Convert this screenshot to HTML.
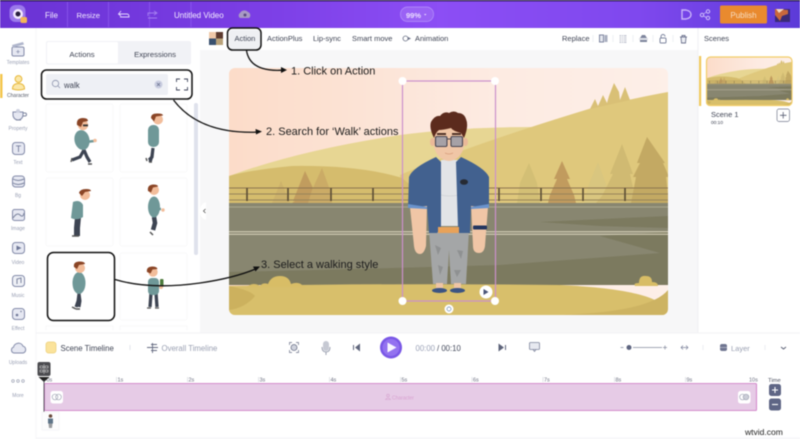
<!DOCTYPE html>
<html><head><meta charset="utf-8"><style>
html,body{margin:0;padding:0;background:#fff;width:800px;height:439px;overflow:hidden}
svg{display:block;position:absolute;left:0;top:0;filter:blur(.45px)}
text{font-family:"Liberation Sans",sans-serif}
.m{font-size:8px;fill:#3f4454}
.s{font-size:5px;fill:#9aa0b4;text-anchor:middle}
.t{font-size:8px;fill:#f4ecff}
.r{font-size:5.5px;fill:#6b6f80}
.a{font-size:11px;fill:#1c1c1c}
.ic{fill:#e6e8f2;stroke:#838ba9;stroke-width:1}
.ln{fill:none;stroke:#7d859f;stroke-width:1}
</style></head><body>
<svg width="800" height="439" viewBox="0 0 800 439" xmlns="http://www.w3.org/2000/svg">
<defs>
<linearGradient id="top" x1="0" x2="1" y1="0" y2="0"><stop offset="0" stop-color="#6a33d4"/><stop offset=".3" stop-color="#7a3de4"/><stop offset=".55" stop-color="#8c4ef5"/><stop offset=".8" stop-color="#7f48ee"/><stop offset="1" stop-color="#5c3bd8"/></linearGradient>
<linearGradient id="sky" x1="0" x2="1" y1="0" y2="0"><stop offset="0" stop-color="#fcdcc9"/><stop offset=".6" stop-color="#fdebe2"/><stop offset="1" stop-color="#fdefe8"/></linearGradient>
<clipPath id="cv"><rect x="229" y="68" width="439" height="247" rx="6"/></clipPath>
<clipPath id="th"><rect x="706" y="57" width="86" height="49" rx="4"/></clipPath>
<g id="scene">
<rect x="229" y="68" width="439" height="247" fill="url(#sky)"/>
<path d="M229 176Q300 150 400 135Q460 127 535 127L535 210L229 210Z" fill="#e7d693"/>
<path d="M400 175Q470 145 592 108Q640 97 668 92L668 210L400 210Z" fill="#dfc87c"/>
<path d="M590 109L595 99L598 106L603 95L607 103L609 96L614 83L619 92L620 100L625 87L630 100Z" fill="#d9c076"/>
<path d="M229 176Q250 170 292 166Q360 165 402 178L440 210L229 210Z" fill="#d5bc6d"/>
<path d="M281 181l-9 22h18Z" fill="#cdb26a"/>
<path d="M305 171l-12 30h2l-3 2h28l-3-2h2Z" fill="#c19c5e"/>
<path d="M322 168l-10 22-4 13h24l-2-13Z" fill="#cbab66"/>
<path d="M529 163l-9 20-3 20h23l-3-20Z" fill="#d3bf75"/>
<path d="M562 161l-8 18 3 0-7 16-2 8h28l-2-8-7-16 3 0Z" fill="#c19b5e"/>
<path d="M598 162l-9 22-5 19h26l-4-19Z" fill="#d9c67f"/>
<path d="M622 144l-12 30 3 0-11 22-6 7h44l-5-7-5-22 3 0Z" fill="#d0ba72"/>
<path d="M647 137l-10 26 3 0-7 14 3 0-5 26h38l-3-26 3 0-6-14 2 0Z" fill="#c3a963"/>
<rect x="229" y="203" width="439" height="82" fill="#888670"/>
<path d="M540 222L668 216V228L600 226ZM600 236L668 232V285H229V272Q400 268 500 265L660 253Z" fill="#7c7a5f"/>
<path d="M229 207H668" stroke="#b6b399" stroke-width=".8"/>
<path d="M229 231.700H668M229 234.300H668" stroke="#ddd7bf" stroke-width="1"/>
<path d="M229 188H668" stroke="#8d7550" stroke-width="1"/><path d="M229 194H668M229 200H668" stroke="#97845a" stroke-width=".9"/>
<path d="M247 188V201M288 188V201M331 188V201M373 188V201M415 188V201M457 188V201M499 188V201M541 188V201M583 188V201M625 188V201" stroke="#5a4c34" stroke-width="1.600"/>
<path d="M229 286Q400 283 560 285Q668 290 668 315H229Z" fill="#d8bf6b"/>
<path d="M229 286Q250 290 255 296Q245 308 229 310Z" fill="#ccb15e"/>
<path d="M560 315Q650 312 668 290V315Z" fill="#cdb362"/>
<path d="M248 286q6-4 12 0q3-4 8-2q3-8 12-8q9 0 11 8q8-3 12 2q4 0 3 1h-60Z" fill="#d8bd66"/>
<path d="M635 286q-2-3 4-3q0-8 7-7q6 0 6 6q6 0 6 4Z" fill="#d8bd66"/>
</g>
</defs>

<rect width="800" height="439" fill="#fff"/>
<!-- top bar -->
<rect y="1" width="800" height="27" fill="url(#top)"/><rect width="800" height="1.200" fill="#1d1038"/>
<rect x="9.500" y="5" width="16" height="17" rx="6" fill="#a78bf0" opacity=".8"/><circle cx="18" cy="14" r="5" fill="#f3e9ff"/><circle cx="18" cy="14" r="2.500" fill="#2a2040"/><rect x="20.500" y="17" width="6.500" height="6" rx="1.500" fill="#f3b557"/>
<path d="M67.500 2V27M108.500 2V27M149.500 2V27M191 2V27" stroke="#8f5cf0" stroke-width=".7"/>
<text x="45" y="18" class="t">File</text><text x="76.500" y="18" class="t" style="font-size:7.700px">Resize</text>
<path d="M119 14h8q2 0 2 3h-9M121 11l-2.500 3 2.500 2" fill="none" stroke="#e5d8ff" stroke-width=".9"/>
<path d="M148 16v-3h9M154 11l3 2-3 2M148 18h9" fill="none" stroke="#a47ef0" stroke-width=".9"/>
<text x="174" y="18" class="t">Untitled Video</text>
<path d="M240 18a3 3 0 0 1 0-5a5 5 0 0 1 8-1a3.500 3.500 0 0 1 1 6Z" fill="#a89ac4"/><circle cx="245" cy="15" r="1.500" fill="#5a4a80"/>
<rect x="400.500" y="7" width="33" height="14.500" rx="7" fill="#9a62f5" stroke="#b592fa" stroke-width=".7"/>
<text x="406" y="18" style="font-size:7.500px;font-weight:bold;fill:#eadcff">99%</text><path d="M424 14h2.500l-1.250 1.500Z" fill="#eadcff"/>
<path d="M682 10h4q5 1 5 4.500t-5 4.500h-4Z" fill="none" stroke="#c9b4fa" stroke-width="1.400"/>
<circle cx="702" cy="15" r="1.700" fill="none" stroke="#d0bffa"/><circle cx="708" cy="11.500" r="1.700" fill="none" stroke="#d0bffa"/><circle cx="708" cy="18" r="1.700" fill="none" stroke="#d0bffa"/><path d="M703.500 14l3-2M703.500 16l3 1.500" stroke="#d0bffa" stroke-width=".7"/>
<rect x="720" y="5.500" width="47" height="18" rx="1.500" fill="#e98a2f"/>
<text x="743.500" y="18" style="font-size:8px;fill:#f7dcc0;text-anchor:middle">Publish</text>
<rect x="775" y="9" width="15" height="13" fill="#3a2a78"/><path d="M775 9l13 1 0 4-6 2-2 5-5-6Z" fill="#c9683c"/><path d="M776 9h8l-5 4Z" fill="#f3d8c0"/>

<!-- sidebar -->
<rect y="28" width="36" height="305" fill="#fff"/><path d="M36 28V439" stroke="#f6f6f8" stroke-width="1"/>
<rect x="0" y="74" width="2.500" height="24" fill="#f3c64d"/>
<rect x="12" y="47" width="12" height="9" rx="1.500" class="ic"/><path d="M12 45l11-3 1 2.500-11 3Z" fill="#b0b6cc"/><path d="M18 50v3.500M16.200 51.700h3.600" stroke="#838ba9" stroke-width=".7"/>
<text x="18" y="64" class="s">Templates</text>
<circle cx="18.500" cy="79" r="3.400" fill="#fbe7a8" stroke="#e8b83a" stroke-width="1"/><path d="M12.500 89q0-5.500 6-5.500t6 5.500q-6 2-12 0Z" fill="#fbe7a8" stroke="#e8b83a" stroke-width="1"/>
<text x="18" y="97" class="s" style="fill:#555a68">Character</text>
<path d="M13 112h10v3a5 5 0 0 1-10 0Z" class="ic"/><path d="M23 113h2a1.500 1.500 0 0 1 0 3h-2.500M16 120h5" class="ln"/><circle cx="18" cy="111" r="2" fill="#cdd1e0"/>
<text x="18" y="130" class="s">Property</text>
<rect x="12.500" y="142.500" width="12" height="12" rx="3" class="ic"/><text x="18.500" y="152" style="font-size:9px;fill:#6f7797;text-anchor:middle">T</text>
<text x="18" y="164" class="s">Text</text>
<rect x="12.500" y="176" width="12" height="11" rx="3" class="ic"/><path d="M13 179q5 3 11 0M13 183q5 3 11 0" class="ln"/>
<text x="18" y="197" class="s">Bg</text>
<rect x="12.500" y="209.500" width="12" height="11" rx="2" class="ic"/><path d="M13 218q4-6 7-3t4-2" class="ln"/>
<text x="18" y="230" class="s">Image</text>
<rect x="12.500" y="242.500" width="12" height="11" rx="3" class="ic"/><path d="M16.500 245.500l5 2.500-5 2.500Z" fill="#6f7797"/>
<text x="18" y="264" class="s">Video</text>
<rect x="12.500" y="275.500" width="12" height="11" rx="3" class="ic" style="fill:#eef0f6"/><path d="M17 284v-5l4-1v5" class="ln"/>
<text x="18" y="297" class="s">Music</text>
<rect x="12.500" y="308.500" width="12" height="11" rx="3" class="ic"/><circle cx="17" cy="315" r="1.300" fill="#6f7797"/><circle cx="21" cy="311.500" r=".7" fill="#6f7797"/>
<text x="18" y="330" class="s">Effect</text>
<path d="M14 353a3 3 0 0 1-.5-5.800a5 5 0 0 1 9.500-1a3.500 3.500 0 0 1 0 6.800Z" class="ic"/>
<text x="18" y="364" class="s">Uploads</text>
<circle cx="13" cy="381" r="1.300" fill="none" stroke="#8d93a8" stroke-width=".6"/><circle cx="18" cy="381" r="1.300" fill="none" stroke="#8d93a8" stroke-width=".6"/><circle cx="23" cy="381" r="1.300" fill="none" stroke="#8d93a8" stroke-width=".6"/>
<text x="18" y="397" class="s">More</text>

<!-- panel -->
<rect x="36.500" y="28" width="163.500" height="305" fill="#fff"/>
<rect x="46" y="41" width="145" height="23.500" rx="2" fill="#f1f2f6"/><rect x="47" y="42" width="71" height="21.500" rx="1.500" fill="#fff"/>
<text x="82" y="57" class="m" style="text-anchor:middle;font-size:7.700px">Actions</text><text x="155" y="57" class="m" style="text-anchor:middle;font-size:7.700px">Expressions</text>
<rect x="46" y="74" width="122" height="21" rx="2" fill="#eef0f5"/>
<circle cx="55.500" cy="83.500" r="3.200" fill="none" stroke="#8b92ac" stroke-width=".8"/><path d="M58 86l2 2" stroke="#8b92ac" stroke-width=".8"/>
<text x="64" y="88" class="m" style="font-size:7.800px">walk</text>
<circle cx="158.500" cy="84.500" r="4" fill="#c9cde0"/><path d="M157 83l3 3M160 83l-3 3" stroke="#6b7290" stroke-width=".8"/>
<path d="M176.500 82v-3h3.500M184 79h3.500v3M187.500 87v3h-3.500M180 90h-3.500v-3" fill="none" stroke="#40465c" stroke-width=".9"/>
<g fill="#fff" stroke="#f8f8fa" stroke-width="1"><rect x="46" y="104" width="67" height="68" rx="2"/><rect x="120" y="104" width="67" height="68" rx="2"/><rect x="46" y="178" width="67" height="68" rx="2"/><rect x="120" y="178" width="67" height="68" rx="2"/><rect x="120" y="253" width="67" height="67" rx="2"/><rect x="46" y="326" width="67" height="20"/><rect x="120" y="326" width="67" height="20"/></g>
<rect x="194" y="103" width="4" height="152" rx="2" fill="#dfe2ec"/>

<!-- mini characters -->
<g>
<path d="M84 150l-4 7-8 3M84 150l3 7 3 5" fill="none" stroke="#3d4452" stroke-width="3.200"/><path d="M72 158l-1 4M88 164h4" stroke="#555" stroke-width="1.400"/>
<ellipse cx="82" cy="140" rx="7.500" ry="10" fill="#6f9898" transform="rotate(-12 82 140)"/><path d="M86 142l8-1" stroke="#6f9898" stroke-width="2.500"/><circle cx="95" cy="140.500" r="1.800" fill="#f2bd9b"/>
<circle cx="83" cy="125" r="5.200" fill="#f2bd9b"/><path d="M77 125q-1-7 6-7 5 0 5 3l-5 1-2 5Z" fill="#8a4526"/><rect x="83" y="124.500" width="5" height="1.800" fill="#333"/>
</g>
<g>
<path d="M153 148l-1 9-3 3M153 148l-1 8-2 6" fill="none" stroke="#3d4452" stroke-width="3.200"/><path d="M146 158l1 3M149 162h3" stroke="#555" stroke-width="1.400"/>
<rect x="148" y="125" width="11" height="22" rx="5" fill="#6f9898"/>
<circle cx="158" cy="119.500" r="5" fill="#f2bd9b"/><path d="M151 118q0-5 7-4.500 5 0 5 2l-7 1-2 5Z" fill="#8a4526"/>
</g>
<g>
<path d="M78 217l-1 11v8" fill="none" stroke="#3d4452" stroke-width="6"/><path d="M72 236h7" stroke="#555" stroke-width="1.500"/>
<path d="M73 202q7-3 10 3l0 12q-6 4-12 1Z" fill="#6f9898"/>
<circle cx="85" cy="195" r="5" fill="#f2bd9b"/><path d="M79 193q1-4 7-4 5 0 5 2l-6 1-3 4Z" fill="#8a4526"/>
</g>
<g>
<path d="M154 217l1 6-2 7" fill="none" stroke="#3d4452" stroke-width="4.500"/><path d="M150 232l3 3" stroke="#555" stroke-width="1.500"/>
<ellipse cx="154" cy="207" rx="6" ry="10.500" fill="#6f9898"/><path d="M157 209h4" stroke="#6f9898" stroke-width="2.500"/><circle cx="163" cy="210" r="1.700" fill="#f2bd9b"/>
<circle cx="154" cy="190" r="5" fill="#f2bd9b"/><path d="M148 191q-1-6 5-6.500 5 0 5 2l-5 1-2 5Z" fill="#8a4526"/>
</g>
<g>
<path d="M79 293l-1 8-2 6M79 293l1 8-1 6" fill="none" stroke="#3d4452" stroke-width="3"/><path d="M72 307l4 2M76 309h4" stroke="#555" stroke-width="1.500"/>
<ellipse cx="79" cy="283" rx="6.500" ry="11" fill="#6f9898"/>
<circle cx="80" cy="268" r="5" fill="#f2bd9b"/><path d="M74 267q-1-5 5-5.500 6 0 6 2.500l-6 1-2 4Z" fill="#8a4526"/>
</g>
<g>
<path d="M151 293l-1 14M156 293l1 14" fill="none" stroke="#3d4452" stroke-width="3.300"/><path d="M147 308h4M155 308h4" stroke="#555" stroke-width="1.300"/>
<rect x="148" y="278" width="11" height="17" rx="4" fill="#6f9898"/>
<rect x="160" y="279" width="3.500" height="8" rx="1" fill="#4c7a3c"/><circle cx="161" cy="287" r="2" fill="#f2bd9b"/>
<circle cx="153" cy="272" r="4.700" fill="#f2bd9b"/><path d="M147 272q-1-5 5-5.500 5 0 5.500 2.500l-5 .5-2 4Z" fill="#8a4526"/>
</g>
<rect x="36.500" y="330" width="164" height="3" fill="#fff"/>

<!-- canvas area -->
<rect x="200" y="28" width="600" height="305" fill="#f7f7f8"/>
<path d="M200 211q0-7 6-9v18q-6-2-6-9Z" fill="#fff"/><path d="M205.500 209l-2 2 2 2" fill="none" stroke="#555" stroke-width=".8"/>
<rect x="200" y="28" width="598" height="22" fill="#fff"/>
<rect x="209" y="32" width="7" height="6.500" fill="#efc8a8"/><rect x="216" y="32" width="7" height="6.500" fill="#5c3a2e"/><rect x="209" y="38.500" width="7" height="6.500" fill="#39516f"/><rect x="216" y="38.500" width="7" height="6.500" fill="#b9a27a"/>
<rect x="229" y="30" width="31" height="19" rx="3" fill="#eff0f3"/>
<text x="234.500" y="41" class="m" style="font-size:7.500px">Action</text><text x="267" y="41" class="m" style="font-size:7.500px">ActionPlus</text><text x="313" y="41" class="m" style="font-size:7.500px">Lip-sync</text><text x="352" y="41" class="m" style="font-size:7.500px">Smart move</text><text x="415" y="41" class="m" style="font-size:7.500px">Animation</text><text x="562" y="41" class="m" style="font-size:7.500px">Replace</text>
<circle cx="405.500" cy="38.500" r="2.500" fill="none" stroke="#6b7186" stroke-width=".8"/><path d="M408 37l3 1.500-3 1.500Z" fill="#6b7186"/>
<rect x="599.500" y="35" width="4" height="7" class="ln" style="fill:#e6e8ef"/><rect x="604.500" y="35" width="3" height="7" fill="#a9aec0"/>
<rect x="619.500" y="35" width="7" height="8" fill="#b4b7c6" opacity=".7"/><path d="M619.500 37h7M619.500 39h7M619.500 41h7M621.500 35v8M623.500 35v8" stroke="#fff" stroke-width=".7"/>
<path d="M640 42v-4l2-3h3l2 3v4Z" fill="#7d849c"/><rect x="639" y="38" width="9" height="2" fill="#dfe1e8"/>
<rect x="660" y="38" width="6" height="5" rx="1" class="ln"/><path d="M661 38v-1.500a2 2 0 0 1 4 0" class="ln"/>
<path d="M680 37h7M681 37l.5 6h4l.5-6M682 37v-1.500h3V37" fill="#eceef3" stroke="#6f7590" stroke-width=".9"/>
<path d="M593 35v7M613 35v7M633 35v7M653 35v7M673 35v7" stroke="#eeeff3"/>
<!-- canvas scene -->
<g clip-path="url(#cv)"><use href="#scene"/></g>

<!-- scenes panel -->
<rect x="698" y="28" width="102" height="305" fill="#fff"/><path d="M698 28V333" stroke="#f0f0f3"/>
<text x="704" y="41" class="m" style="font-size:7.500px">Scenes</text>
<rect x="699" y="56" width="2.200" height="50" fill="#f0c95e"/>
<g clip-path="url(#th)"><g transform="translate(706 57) scale(.1959 .1984) translate(-229 -68)"><use href="#scene"/></g></g>
<rect x="706.500" y="57" width="85.500" height="48.500" rx="4" fill="none" stroke="#f2cd68" stroke-width="1.200"/>
<text x="711" y="117" class="m" style="font-size:7.500px">Scene 1</text><text x="711" y="124" class="m" style="font-size:4.800px">00:10</text>
<rect x="777" y="109" width="12.500" height="12.500" rx="2" fill="#fff" stroke="#747a8e" stroke-width=".7"/><path d="M783.200 112v6.500M780 115.300h6.500" stroke="#555b70" stroke-width=".8"/>

<!-- timeline -->
<rect x="36.500" y="333" width="763.500" height="105" fill="#fff"/><path d="M36 333H800M36 438.300H800" stroke="#f2f2f5" stroke-width="1"/>
<rect x="46" y="342" width="10" height="11" rx="2.500" fill="#fbe39b" stroke="#eccf78" stroke-width=".7"/>
<text x="60.500" y="351" class="m" style="font-size:7.800px">Scene Timeline</text>
<path d="M130 345v5" stroke="#e4e5ea"/>
<path d="M147 347.500h11M151 344.500h6M151 350.500h6M152.500 343v10" stroke="#646a80" stroke-width=".9"/>
<text x="161.500" y="351" class="m" style="font-size:7.800px;fill:#9aa0b2">Overall Timeline</text>
<circle cx="294" cy="347.500" r="3" fill="#cfd2dd" stroke="#6c7288" stroke-width=".8"/><path d="M289.500 345v-2.500h2.500M296 342.500h2.500v2.500M298.500 350v2.500H296M292 352.500h-2.500V350" fill="none" stroke="#6c7288" stroke-width=".7"/>
<rect x="323" y="341" width="6" height="10" rx="3" fill="#c6c9d3"/><path d="M322 347q0 5 4 5t4-5M326 352v3" fill="none" stroke="#9ba0b0"/>
<rect x="353" y="345" width="1" height="5" fill="#60667c"/><path d="M360 343.500v8l-5-4Z" fill="#60667c"/>
<circle cx="391" cy="347.500" r="11" fill="#7a58e6"/><circle cx="391" cy="347.500" r="8.500" fill="#9372f0"/><path d="M387.500 342.500l9 5-9 5Z" fill="#f8f6ff"/>
<text x="415.500" y="351" style="font-size:7.800px;fill:#9ca3b8">00:00</text><text x="437" y="351" style="font-size:7.800px;fill:#444a5c"> / 00:10</text>
<path d="M498.500 343.500v8l5.500-4Z" fill="#5e647a"/><rect x="505" y="345" width="1" height="5" fill="#60667c"/>
<rect x="529.500" y="342.500" width="10" height="7" rx="1" fill="#e7e9f0" stroke="#7d849c" stroke-width=".8"/><path d="M533 349.500l1.500 2 1.500-2" fill="none" stroke="#7d849c" stroke-width=".8"/>
<path d="M620.500 347.500h3M633 347.500h29M663 347.500h4M665 345.500v4" stroke="#858b9f" stroke-width=".7"/><circle cx="629" cy="347.500" r="2.500" fill="#5e6580"/>
<path d="M681 347.500h7M683 345.500l-2 2 2 2M686 345.500l2 2-2 2" fill="none" stroke="#7d849c" stroke-width=".7"/>
<path d="M703 345v5M765 345v5" stroke="#eceef2"/>
<rect x="720" y="344" width="7" height="7" rx="2" fill="#6f7590"/><path d="M720 347.500h7" stroke="#cfd2dd" stroke-width=".6"/>
<text x="731" y="351" class="m" style="font-size:7.500px;fill:#9aa0b2">Layer</text>
<path d="M781 347l2.500 2 2.500-2" fill="none" stroke="#555b70" stroke-width=".9"/>
<!-- ruler -->
<text x="46.500" y="381.500" class="r">0s</text><text x="117.500" y="381.500" class="r">1s</text><text x="188.500" y="381.500" class="r">2s</text><text x="259.500" y="381.500" class="r">3s</text><text x="330.500" y="381.500" class="r">4s</text><text x="401.500" y="381.500" class="r">5s</text><text x="473" y="381.500" class="r">6s</text><text x="544" y="381.500" class="r">7s</text><text x="615.500" y="381.500" class="r">8s</text><text x="686.500" y="381.500" class="r">9s</text><text x="749" y="381.500" class="r">10s</text>
<path d="M116.500 377v5M187.500 377v5M258.500 377v5M329.500 377v5M400.500 377v5M472 377v5M543 377v5M614.500 377v5M685.500 377v5" stroke="#cfd1d9" stroke-width=".6"/>
<rect x="44.500" y="383.500" width="712" height="27" rx="1" fill="#e6cbe6" stroke="#d48ccd" stroke-width="1.100"/>
<rect x="50.500" y="391" width="12.500" height="12.500" rx="2.500" fill="#fff"/><rect x="738" y="391" width="12.500" height="12.500" rx="2.500" fill="#fff"/>
<circle cx="55" cy="397" r="2.800" fill="none" stroke="#a0a4b4" stroke-width=".7"/><circle cx="58.500" cy="397" r="2.800" fill="none" stroke="#a0a4b4" stroke-width=".7"/><circle cx="742.500" cy="397" r="2.800" fill="none" stroke="#a0a4b4" stroke-width=".7"/><circle cx="746" cy="397" r="2.800" fill="#ccced8" stroke="#a0a4b4" stroke-width=".7"/>
<circle cx="388" cy="395.500" r="1.300" fill="none" stroke="#d6a2ce" stroke-width=".6"/><path d="M385.500 399.500q2.500-3 5 0Z" fill="none" stroke="#d6a2ce" stroke-width=".6"/>
<text x="392" y="399.500" style="font-size:5px;fill:#d8a0d0">Character</text>
<text x="768" y="382" style="font-size:5.800px;fill:#4a4f5e">Time</text>
<rect x="769" y="384" width="12" height="12" rx="2.500" fill="#5e6585"/><path d="M775 387v6M772 390h6" stroke="#fff" stroke-width="1.100"/>
<rect x="769" y="398.500" width="12" height="12" rx="2.500" fill="#5e6585"/><path d="M772 404.500h6" stroke="#fff" stroke-width="1.100"/>
<rect x="37.500" y="362" width="13" height="14" rx="2" fill="#4b4b4f"/><path d="M40 366h3v2h-3ZM45 366h3v2h-3ZM40 370h3v2h-3ZM45 370h3v2h-3Z" fill="none" stroke="#ddd" stroke-width=".6"/><path d="M44 364v10" stroke="#ddd" stroke-width=".5"/>
<path d="M38.500 377h11l-5.500 5Z" fill="#222"/><path d="M44 380v32" stroke="#3a3a40" stroke-width=".8"/>
<rect x="42" y="412" width="17" height="18" fill="#fcfcfd" stroke="#f0f0f3" stroke-width=".6"/><circle cx="50.500" cy="416" r="1.800" fill="#6a4a3c"/><path d="M48 418.500h5v5h-5Z" fill="#5e7488"/><path d="M48.500 423.500h4l-.5 4.500h-3Z" fill="#9a9ca0"/>

<!-- character -->
<path d="M429 230H469L466 284H451L449 250L447 284H433Z" fill="#a4a6a7"/>
<path d="M435 245l6 3-3 7ZM457 250l6 1-2 8ZM438 265l5 2-3 8ZM454 270l7 0-4 7Z" fill="#8f9192"/>
<rect x="436" y="283" width="7" height="6" fill="#eec5a5"/><rect x="454" y="283" width="7" height="6" fill="#eec5a5"/>
<ellipse cx="439.500" cy="290.500" rx="7.500" ry="2.500" fill="#3b5482"/><ellipse cx="457.500" cy="290.500" rx="7.500" ry="2.500" fill="#3b5482"/>
<path d="M410 207L427 204L426 246Q424 254 420 254Q415 254 414 246Z" fill="#f0c6a6"/>
<path d="M471 204L488 207L485 246Q484 253 479 253Q473 253 473 246Z" fill="#f0c6a6"/>
<rect x="473" y="225.500" width="14" height="4" rx="1" fill="#24365f"/>
<rect x="444" y="150" width="10" height="14" fill="#eec0a0"/>
<path d="M441 160H458L461 226H437Z" fill="#e2e4e7"/><path d="M441 195q8 2 18 0" stroke="#cfd2d6" fill="none" stroke-width=".7"/>
<path d="M436 157L441 162L441 228L437 233H429L427 206L408 208L409 177Q412 168 436 157Z" fill="#42618f"/>
<path d="M456 162L461 157Q485 168 489 177L489 208L471 206L470 233H459L458 228Z" fill="#42618f"/>
<path d="M408 204L427 207V209L408 208ZM471 207L489 204V208L471 209Z" fill="#6a93cc"/>
<ellipse cx="464" cy="182" rx="4" ry="2.800" fill="#262a33"/>
<rect x="438" y="227" width="21" height="6" fill="#e8a259"/>
<ellipse cx="449" cy="142" rx="15.500" ry="19" fill="#f0c6a6"/>
<ellipse cx="432.500" cy="142" rx="2.500" ry="4" fill="#eab998"/><ellipse cx="465.500" cy="142" rx="2.500" ry="4" fill="#eab998"/>
<path d="M434 138q-5-10 -3-16q4-7 9-6q4-5 9-3q5-3 9 0q6 0 8 6q3 7-2 19l-3-5q-8-2-10-5q-8 2-12 2q-3 2-5 8Z" fill="#5c2b1d"/>
<path d="M437 134h9M452 134h9" stroke="#3c2018" stroke-width="1.800"/>
<rect x="435.500" y="136.500" width="11.500" height="10" rx="1.500" fill="#a6a1a6" stroke="#4a4652" stroke-width="1.100"/><rect x="451" y="136.500" width="11.500" height="10" rx="1.500" fill="#a6a1a6" stroke="#4a4652" stroke-width="1.100"/><path d="M447 139h4" stroke="#4a4652"/>
<path d="M445 153q4 2 8 0" stroke="#d79d7c" fill="none" stroke-width=".8"/>
<!-- selection -->
<rect x="402.500" y="81" width="93" height="220" fill="none" stroke="#cb90cc" stroke-width="1.200"/>
<g fill="#fff"><circle cx="402.500" cy="81" r="4"/><circle cx="495" cy="81" r="4"/><circle cx="402.500" cy="301" r="4"/><circle cx="495" cy="301" r="4"/><circle cx="486" cy="292" r="6.500"/><circle cx="449" cy="309" r="4.500"/></g>
<path d="M483.500 289l5 3-5 3Z" fill="#4a5578"/>
<circle cx="449" cy="309" r="2" fill="none" stroke="#6f8fb0" stroke-width=".7"/>

<!-- callouts -->
<g fill="none" stroke="#111" stroke-width="1.500">
<rect x="227.500" y="28" width="33.500" height="22" rx="5"/>
<rect x="41.500" y="70" width="150.500" height="29" rx="5"/>
<rect x="47.500" y="252.500" width="67" height="68" rx="6"/>
<path d="M246.500 50.500Q250 72 282 70.200" stroke-width="1.300"/>
<path d="M173.500 100Q200 135 260 132" stroke-width="1.300"/>
<path d="M115 279.500Q150 290 200 283Q235 278 258 268" stroke-width="1.300"/>
</g>
<g fill="#111"><path d="M287 70l-6 3v-6Z"/><path d="M262 131.500l-6 3-.5-5.500Z"/><path d="M260 266.500l-4.500 5-2.500-5Z"/></g>
<text x="291" y="74.500" class="a">1. Click on Action</text>
<text x="266" y="135" class="a">2. Search for ‘Walk’ actions</text>
<text x="261" y="268" class="a">3. Select a walking style</text>
<text x="745" y="435" style="font-size:8.500px;fill:#222">wtvid.com</text>
</svg>
</body></html>
